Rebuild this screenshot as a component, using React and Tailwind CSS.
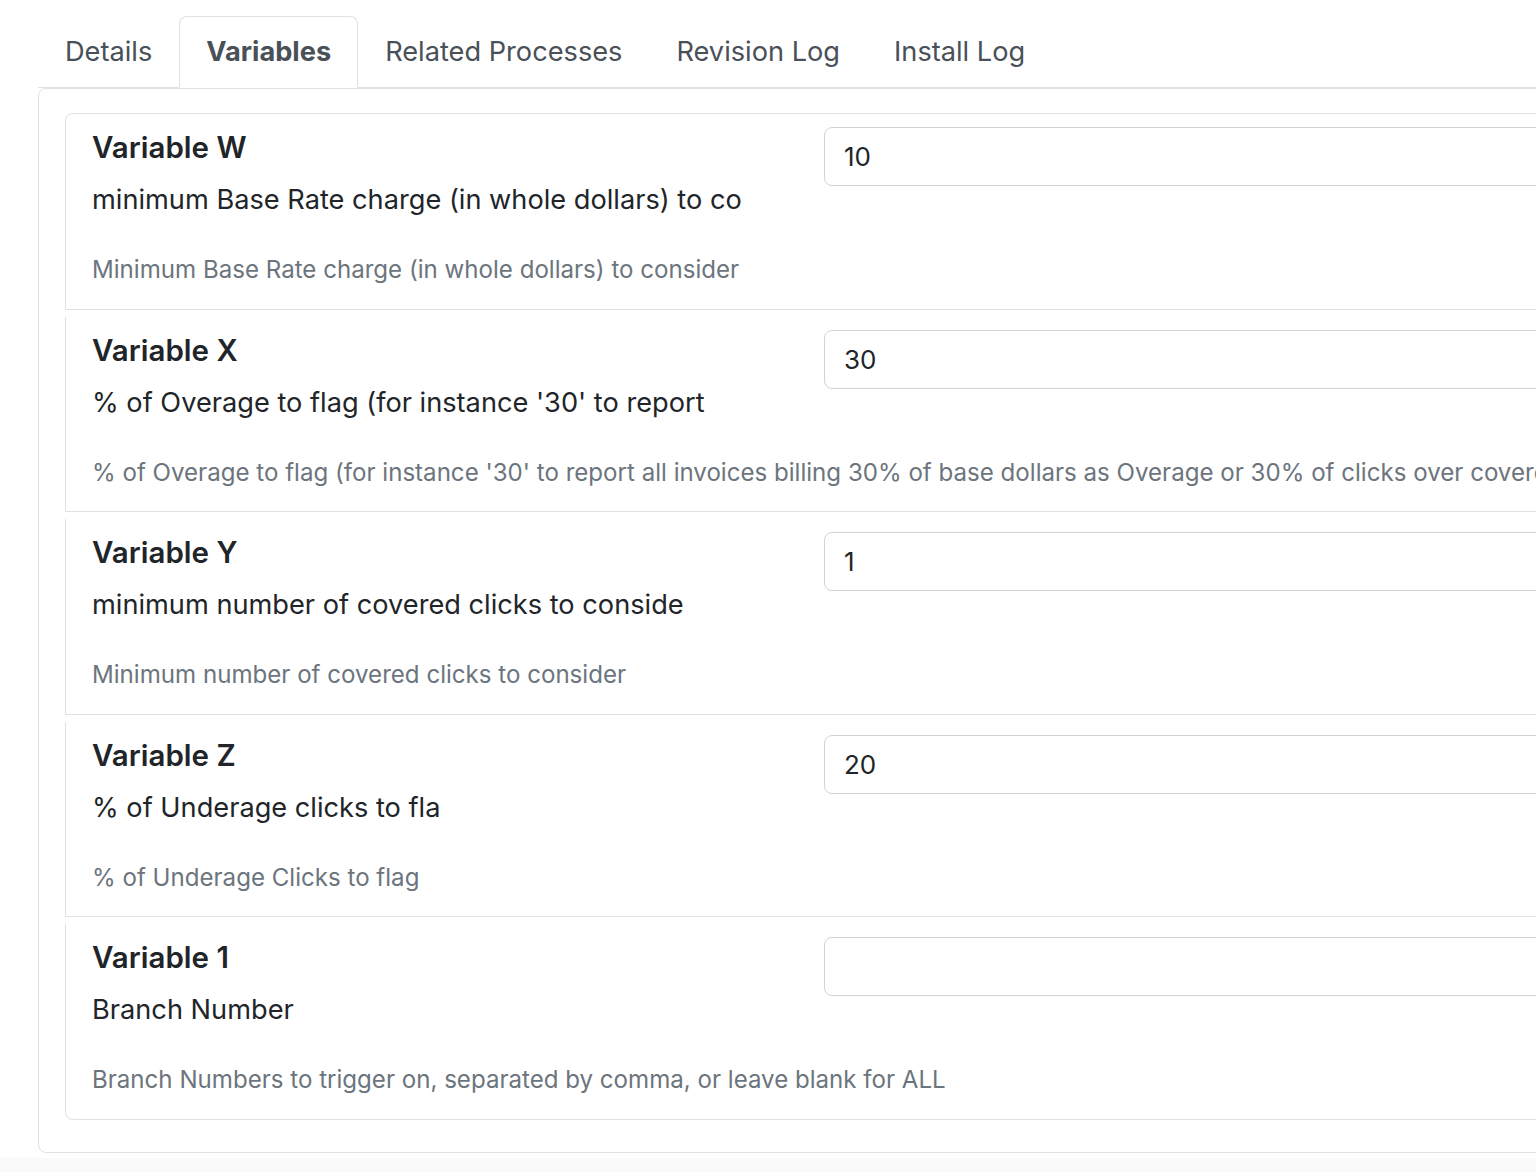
import React from 'react'

const tabs = ['Details', 'Variables', 'Related Processes', 'Revision Log', 'Install Log']

const variables = [
  {
    name: 'Variable W',
    label: 'minimum Base Rate charge (in whole dollars) to co',
    help: 'Minimum Base Rate charge (in whole dollars) to consider',
    value: '10',
  },
  {
    name: 'Variable X',
    label: "% of Overage to flag (for instance '30' to report",
    help: "% of Overage to flag (for instance '30' to report all invoices billing 30% of base dollars as Overage or 30% of clicks over covered clicks)",
    value: '30',
  },
  {
    name: 'Variable Y',
    label: 'minimum number of covered clicks to conside',
    help: 'Minimum number of covered clicks to consider',
    value: '1',
  },
  {
    name: 'Variable Z',
    label: '% of Underage clicks to fla',
    help: '% of Underage Clicks to flag',
    value: '20',
  },
  {
    name: 'Variable 1',
    label: 'Branch Number',
    help: 'Branch Numbers to trigger on, separated by comma, or leave blank for ALL',
    value: '',
  },
]

function VariableCard({ v, first, last }) {
  return (
    <div
      className={
        'border-[#dee2e6] border-l border-r border-b pt-[13px] pb-[20.5px] px-[26px] bg-white ' +
        (first ? 'border-t rounded-tl-[8px] ' : 'mt-[7px] ') +
        (last ? 'rounded-bl-[8px]' : '')
      }
    >
      <div className="flex">
        <div className="w-[732px] shrink-0">
          <h5 className="mt-[2px] text-[29.5px] leading-[36px] font-semibold text-[#212529]">{v.name}</h5>
          <div className="mt-[14px] text-[27.2px] leading-[42px] text-[#212529] whitespace-nowrap">{v.label}</div>
        </div>
        <div className="flex-1">
          <input
            type="text"
            defaultValue={v.value}
            className="w-full h-[59px] border border-[#ced4da] rounded-[8px] px-[19px] text-[26px] text-[#212529] bg-white outline-none"
          />
        </div>
      </div>
      <div className="mt-[31px] text-[24.1px] leading-[36px] text-[#6c757d] whitespace-nowrap">{v.help}</div>
    </div>
  )
}

export default function App() {
  return (
    <div
      className="h-[1172px] w-full overflow-hidden bg-white"
      style={{ fontFamily: 'Inter, "Noto Sans", sans-serif' }}
    >
      <div className="w-[1800px] pl-[38px] pt-[16px]">
        <ul className="flex border-b border-[#dee2e6]">
          {tabs.map((t) => (
            <li key={t} className="-mb-px">
              <span
                className={
                  'block px-[26px] py-[14px] text-[27.2px] leading-[42px] text-[#495057] border rounded-t-[8px] ' +
                  (t === 'Variables'
                    ? 'font-bold border-[#dee2e6] border-b-white bg-white'
                    : 'border-transparent')
                }
              >
                {t}
              </span>
            </li>
          ))}
        </ul>
        <div className="border border-[#dee2e6] rounded-[8px] pt-[24px] pb-[32px] pl-[26px]">
          {variables.map((v, i) => (
            <VariableCard key={v.name} v={v} first={i === 0} last={i === variables.length - 1} />
          ))}
        </div>
        <div className="mt-[5px] h-[40px] bg-[#fafafa] -ml-[38px]" />
      </div>
    </div>
  )
}
